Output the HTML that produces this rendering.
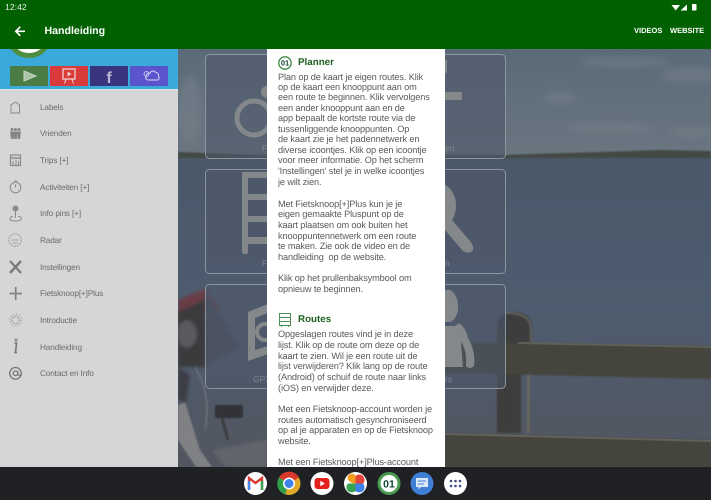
<!DOCTYPE html>
<html><head><meta charset="utf-8"><style>
html,body{margin:0;padding:0;background:#000}
#r{position:relative;width:711px;height:500px;overflow:hidden;font-family:"Liberation Sans",sans-serif;text-rendering:geometricPrecision}
#r svg{position:absolute;left:0;top:0}
.t{position:absolute;white-space:nowrap}
#side{position:absolute;left:0;top:49px;width:178px;height:418px;background:#d6d6d6}
.m{position:absolute;left:40px;font-size:8.2px;line-height:12px;color:#6a6a6a;white-space:nowrap;letter-spacing:-.12px}
#p{position:absolute;left:267px;top:49px;width:178px;height:418px;background:#fff;overflow:hidden}
.l{position:absolute;left:11px;font-size:9.2px;line-height:11px;color:#5a5a5a;white-space:nowrap;letter-spacing:-.12px}
.h{position:absolute;left:31px;font-size:9.8px;line-height:12px;font-weight:bold;color:#1c5f20;white-space:nowrap}
</style></head><body><div id="r">
<svg width="711" height="500" viewBox="0 0 711 500">
<defs>
<linearGradient id="s" x1="0" y1="0" x2="0" y2="1"><stop offset="0" stop-color="#5a6a78"/><stop offset="1" stop-color="#6a7680"/></linearGradient>
<linearGradient id="w" x1="0" y1="0" x2="0" y2="1"><stop offset="0" stop-color="#4a586a"/><stop offset=".5" stop-color="#4e5c6f"/><stop offset="1" stop-color="#525660"/></linearGradient>
<filter id="b"><feGaussianBlur stdDeviation="3.500"/></filter>
<filter id="b2"><feGaussianBlur stdDeviation="1.500"/></filter>
<filter id="b1"><feGaussianBlur stdDeviation=".8"/></filter>
</defs>
<rect y="49" width="711" height="107" fill="url(#s)"/>
<rect y="156" width="711" height="311" fill="url(#w)"/>
<g filter="url(#b)" fill="#76818a" opacity=".55">
<ellipse cx="625" cy="62" rx="45" ry="5"/><ellipse cx="690" cy="75" rx="30" ry="8"/><ellipse cx="560" cy="98" rx="16" ry="6"/>
<ellipse cx="610" cy="128" rx="45" ry="5"/><ellipse cx="692" cy="132" rx="22" ry="5"/><ellipse cx="190" cy="110" rx="12" ry="35"/>
</g>
<path d="M178 152L205 153 260 155 505 155 530 154 600 152 660 150 711 151V158H178Z" fill="#434944" filter="url(#b1)"/>
<!-- fence -->
<path d="M497 433V325Q499 312 514 312 530 312 532 326V343H521V433Z" fill="#3e3e3e" filter="url(#b1)"/>
<path d="M505 313Q530 312 531 328V342" fill="none" stroke="#62625e" stroke-width="2" filter="url(#b1)"/>
<rect x="527" y="373" width="3" height="60" fill="#68685f" filter="url(#b1)"/>
<path d="M445 342L711 346V379L445 373Z" fill="#44443c" filter="url(#b1)"/>
<path d="M518 342L711 346V348L518 344Z" fill="#5f6058"/>
<path d="M445 433L711 440V467H445Z" fill="#44443e" filter="url(#b1)"/>
<path d="M445 433L711 440V442L445 435Z" fill="#62625b"/>
<!-- bike -->
<path d="M178 300L205 289 222 310 178 318Z" fill="#6a3d44" filter="url(#b2)"/>
<path d="M205 292L240 347 205 367Z" fill="#474b58" filter="url(#b2)"/>
<path d="M178 312L205 300 206 367H178Z" fill="#3b3a3e" filter="url(#b2)"/>
<ellipse cx="187" cy="334" rx="10" ry="14" fill="#5a5a5e" filter="url(#b2)"/>
<path d="M178 405L185 402 200 450 212 467H196L178 440Z" fill="#808185" filter="url(#b1)"/>
<path d="M178 367L178 400 186 402 190 375Z" fill="#3d3e44" filter="url(#b2)"/>
<rect x="215" y="405" width="28" height="13" rx="2" fill="#323338" filter="url(#b1)"/>
<path d="M222 418L228 440" stroke="#3a3a3e" stroke-width="3" filter="url(#b1)"/>
<path d="M212 450L267 440V467H226Z" fill="#62656c" filter="url(#b2)"/>
<path d="M195 367Q212 395 205 430" fill="none" stroke="#7a7c80" stroke-width="1" filter="url(#b1)"/>
<!-- cards -->
<g fill="#4e596b" fill-opacity=".6" stroke="#8c959c" stroke-width="1">
<rect x="205.500" y="54.500" width="90" height="104" rx="4"/><rect x="205.500" y="169.500" width="90" height="104" rx="4"/><rect x="205.500" y="284.500" width="90" height="104" rx="4"/>
<rect x="400.500" y="54.500" width="105" height="104" rx="4"/><rect x="400.500" y="169.500" width="105" height="104" rx="4"/><rect x="400.500" y="284.500" width="105" height="104" rx="4"/>
</g>
<!-- card icons -->
<g fill="#85888a" stroke="none">
<circle cx="254" cy="118" r="17" fill="none" stroke="#85888a" stroke-width="5"/>
<circle cx="267" cy="92" r="6"/>
<rect x="242" y="172" width="6" height="82" rx="2"/><rect x="242" y="172" width="28" height="6"/><rect x="242" y="194" width="28" height="6"/><rect x="242" y="216" width="28" height="6"/><rect x="242" y="237" width="28" height="7"/>
<path d="M248 312L268 304V313L255 318V350L268 346V354L248 361Z"/>
<circle cx="265" cy="332" r="8" fill="none" stroke="#85888a" stroke-width="4"/>
<rect x="440" y="92" width="22" height="8"/>
<path d="M440 60H447V72L440 78Z"/>
<path d="M440 181Q456 190 456 205Q456 214 452 220L470 241Q476 249 471 252 466 254 462 250L440 224Z"/>
<path d="M440 290H450Q459 295 458 310 456 320 450 322L440 322Z"/>
<path d="M440 326H455L459 323Q466 328 468 338 476 352 474 366 470 370 466 366 467 350 461 342L463 367H440Z"/>
</g>
<g font-family="Liberation Sans" font-size="8.500" fill="#82878c"><text x="262" y="151">F</text><text x="262" y="266">F</text><text x="253" y="382">GPX</text><text x="445" y="151">en</text><text x="445" y="266">n</text><text x="445" y="382">rs</text></g>
<!-- header -->
<rect width="711" height="49" fill="#016101"/>
<path d="M25 31.300H16M20.300 26.800L15.800 31.300 20.300 35.800" fill="none" stroke="#fff" stroke-width="1.700"/>
<path d="M671.500 5L680 5 675.700 10.500Z" fill="#fff"/>
<path d="M687 4.500V10.500H680.500Z" fill="#fff"/>
<rect x="692" y="4" width="4.500" height="6.500" rx=".8" fill="#fff"/>
<!-- dock -->
<rect y="467" width="711" height="33" fill="#202124"/>
<circle cx="255.500" cy="483.500" r="11.500" fill="#fff"/>
<path d="M249 490V478L255.500 483 262 478V490" fill="none" stroke="#d93a30" stroke-width="2.400"/>
<path d="M249 481V490" stroke="#4285f4" stroke-width="2.400"/><path d="M262 481V490" stroke="#34a853" stroke-width="2.400"/>
<circle cx="289" cy="483.500" r="11.500" fill="#e0a92a"/>
<path d="M289 483.500L279 477.500A11.500 11.500 0 0 1 299 477.500Z" fill="#d8392c"/>
<path d="M289 483.500L279 477.500A11.500 11.500 0 0 0 285 494.500Z" fill="#2f9e49"/>
<circle cx="289" cy="483.500" r="6" fill="#fff"/><circle cx="289" cy="483.500" r="4.500" fill="#3f81ea"/>
<circle cx="322" cy="483.500" r="11.500" fill="#fff"/>
<rect x="314.500" y="478" width="15" height="11" rx="3" fill="#e3201c"/><path d="M320.300 480.700V486.300L325 483.500Z" fill="#fff"/>
<circle cx="355.500" cy="483.500" r="11.500" fill="#fff"/>
<path d="M355.500 483.500V476A3.800 3.800 0 0 0 348 479.700Q351 483.500 355.500 483.500Z" fill="#ef9d1c"/>
<path d="M355.500 483.500H363A3.800 3.800 0 0 0 355.500 476Z" fill="#e3453a"/>
<path d="M355.500 483.500V491A3.800 3.800 0 0 0 363 483.500Z" fill="#3f81ea"/>
<path d="M355.500 483.500H348A3.800 3.800 0 0 0 355.500 491Z" fill="#37a352"/>
<circle cx="389" cy="483.500" r="11.500" fill="#4a9a50"/><circle cx="389" cy="483.500" r="8.500" fill="#fff"/>
<text x="389" y="487.500" text-anchor="middle" font-family="Liberation Sans" font-size="10.500" font-weight="bold" fill="#143">01</text>
<circle cx="422" cy="483.500" r="11.500" fill="#3f7fd6"/>
<path d="M416 478H428V487H421L418.500 489.500V487H416Z" fill="#dbe8f8"/><path d="M418 481H426M418 484H424" stroke="#3f7fd6" stroke-width="1"/>
<circle cx="455.500" cy="483.500" r="11.500" fill="#fff"/>
<g fill="#3d4a8a"><circle cx="451" cy="481" r="1.300"/><circle cx="455.500" cy="481" r="1.300"/><circle cx="460" cy="481" r="1.300"/><circle cx="451" cy="486" r="1.300"/><circle cx="455.500" cy="486" r="1.300"/><circle cx="460" cy="486" r="1.300"/></g>
</svg>

<div class="t" style="left:5px;top:2px;font-size:8.7px;line-height:11px;color:#e8f0e8">12:42</div>
<div class="t" style="left:44.500px;top:25px;font-size:10.6px;line-height:13px;font-weight:bold;color:#fff">Handleiding</div>
<div class="t" style="left:634px;top:26px;font-size:7.500px;line-height:10px;font-weight:bold;color:#fff">VIDEOS</div>
<div class="t" style="left:670px;top:26px;font-size:7.500px;line-height:10px;font-weight:bold;color:#fff">WEBSITE</div>

<div id="side">
<svg width="178" height="418" viewBox="0 0 178 418" style="top:0;left:0">
<rect width="178" height="40" fill="#3aaadb"/>
<circle cx="29" cy="-14.500" r="21" fill="#fff" stroke="#4f8f3f" stroke-width="5"/>
<rect x="10" y="17" width="38" height="20" fill="#4a7d45"/>
<path d="M24 22V32L36 27Z" fill="#a9c2a4" stroke="#c5d6c0" stroke-width="1"/>
<rect x="50" y="17" width="38" height="20" fill="#d93a3a"/>
<rect x="63" y="20" width="12" height="10" fill="none" stroke="#f5d0d0" stroke-width="1.300"/><path d="M67.500 22.500V27.500L71.500 25Z" fill="#f5d0d0"/><path d="M66 30L64.500 34.500M72 30L73.500 34.500" stroke="#f5d0d0"/>
<rect x="90" y="17" width="38" height="20" fill="#39347e"/>
<text x="109" y="34" text-anchor="middle" font-family="Liberation Sans" font-weight="bold" font-size="16" fill="#b9b8d6">f</text>
<rect x="130" y="17" width="38" height="20" fill="#5a55cc"/>
<path d="M146 28Q146 24 150 24 152 20.500 155 23 159 24 158.500 27 160 29 158 31H148Q145 30 146 28Z" fill="none" stroke="#d8d7f5" stroke-width="1"/>
<circle cx="146.500" cy="25" r="2.500" fill="none" stroke="#d8d7f5" stroke-width=".8"/>
<rect y="40" width="178" height="1" fill="#e4e4e4"/>
<g fill="none" stroke="#8b8b8b" stroke-width="1">
<path d="M11 56L15.500 53 19.500 56V64H11Z"/>
<g fill="#858585" stroke="none"><circle cx="12" cy="80.500" r="1.500"/><circle cx="15.500" cy="80.500" r="1.500"/><circle cx="19" cy="80.500" r="1.500"/><path d="M10 82.500H14L13.500 90H11ZM13.500 82.500H17.500L17 90H14ZM17 82.500H21L20 90H18Z"/></g>
<rect x="10.500" y="106" width="10" height="10.500" stroke-width="1.200"/><path d="M10 109H21" stroke-width="1.500"/><path d="M13 112V116M16 110.500V116M18.500 112V116"/>
<circle cx="15.500" cy="138.500" r="5.300"/><path d="M14 132H17M15.500 135.500V138.500"/>
<circle cx="15.500" cy="159.500" r="2.500" fill="#8a8a8a"/><path d="M15.500 162V169M10 170Q10 167.500 13 167.500M18 167.500Q21.500 167.500 21.500 170 21 172 15.500 172 10 172 10 170"/>
<circle cx="15" cy="191" r="6.300" stroke="#a6a6a6" stroke-width="1.300" stroke-dasharray="2 1"/><path d="M11 191H19M12 194H18" stroke="#a6a6a6"/>
<path d="M10 212L21 224" stroke-width="2.300" stroke="#7d7d7d"/><path d="M21 212L10 224" stroke-width="2.600" stroke="#7d7d7d"/>
<path d="M9.500 244.500H22M15.700 238V251" stroke-width="1.700" stroke="#808080"/>
<circle cx="15.700" cy="271" r="3.500" stroke="#a0a0a0" stroke-dasharray="2 1" stroke-width="1.300"/><circle cx="15.700" cy="271" r="5.700" stroke="#a0a0a0" stroke-dasharray="1.500 1.500" stroke-width="1"/>
<path d="M14.500 294H16.500L15.500 303.500H17M14 303.500H15.500" stroke-width="1.600" stroke="#777"/><circle cx="16" cy="291" r="1" fill="#777"/>
<circle cx="15.500" cy="324.300" r="5.800" stroke-width="1.300" stroke="#777"/><circle cx="15.500" cy="324.300" r="2.300" stroke-width="1.300" stroke="#777"/><path d="M18 322V326Q19.500 327 21.300 325" stroke="#777"/>
</g>
</svg>
<div class="m" style="top:52.500px">Labels</div>
<div class="m" style="top:79px">Vrienden</div>
<div class="m" style="top:105.500px">Trips [+]</div>
<div class="m" style="top:132.500px">Activiteiten [+]</div>
<div class="m" style="top:159px">Info pins [+]</div>
<div class="m" style="top:185.500px">Radar</div>
<div class="m" style="top:212.500px">Instellingen</div>
<div class="m" style="top:239px">Fietsknoop[+]Plus</div>
<div class="m" style="top:265.500px">Introductie</div>
<div class="m" style="top:292.500px">Handleiding</div>
<div class="m" style="top:318.500px">Contact en Info</div>
</div>

<div id="p">
<svg width="178" height="418" viewBox="0 0 178 418" style="left:0;top:0">
<circle cx="18" cy="14" r="6.200" fill="none" stroke="#3d8a42" stroke-width="1.300"/>
<text x="18" y="16.700" text-anchor="middle" font-family="Liberation Sans" font-size="7.500" font-weight="bold" fill="#143">01</text>
<g fill="none" stroke="#4d9152" stroke-width="1"><rect x="12.500" y="264.500" width="11" height="12"/><path d="M12.500 268.500H23.500M12.500 272.500H23.500M14.500 276.500V278M21.500 276.500V278"/></g>
</svg>
<div class="h" style="top:8px">Planner</div>
<div class="l" style="top:22.500px">Plan op de kaart je eigen routes. Klik</div>
<div class="l" style="top:33px">op de kaart een knooppunt aan om</div>
<div class="l" style="top:43.400px">een route te beginnen. Klik vervolgens</div>
<div class="l" style="top:53.900px">een ander knooppunt aan en de</div>
<div class="l" style="top:64.300px">app bepaalt de kortste route via de</div>
<div class="l" style="top:74.800px">tussenliggende knooppunten. Op</div>
<div class="l" style="top:85.200px">de kaart zie je het padennetwerk en</div>
<div class="l" style="top:95.700px">diverse icoontjes. Klik op een icoontje</div>
<div class="l" style="top:106.100px">voor meer informatie. Op het scherm</div>
<div class="l" style="top:116.600px">'Instellingen' stel je in welke icoontjes</div>
<div class="l" style="top:128px">je wilt zien.</div>
<div class="l" style="top:149.500px">Met Fietsknoop[+]Plus kun je je</div>
<div class="l" style="top:160px">eigen gemaakte Pluspunt op de</div>
<div class="l" style="top:171px">kaart plaatsen om ook buiten het</div>
<div class="l" style="top:181.500px">knooppuntennetwerk om een route</div>
<div class="l" style="top:192px">te maken. Zie ook de video en de</div>
<div class="l" style="top:203px">handleiding&nbsp; op de website.</div>
<div class="l" style="top:224px">Klik op het prullenbaksymbool om</div>
<div class="l" style="top:235px">opnieuw te beginnen.</div>
<div class="h" style="top:265px">Routes</div>
<div class="l" style="top:280px">Opgeslagen routes vind je in deze</div>
<div class="l" style="top:291px">lijst. Klik op de route om deze op de</div>
<div class="l" style="top:301.500px">kaart te zien. Wil je een route uit de</div>
<div class="l" style="top:312px">lijst verwijderen? Klik lang op de route</div>
<div class="l" style="top:323px">(Android) of schuif de route naar links</div>
<div class="l" style="top:333.500px">(iOS) en verwijder deze.</div>
<div class="l" style="top:355px">Met een Fietsknoop-account worden je</div>
<div class="l" style="top:365.500px">routes automatisch gesynchroniseerd</div>
<div class="l" style="top:376px">op al je apparaten en op de Fietsknoop</div>
<div class="l" style="top:387px">website.</div>
<div class="l" style="top:408px">Met een Fietsknoop[+]Plus-account</div>
</div>
</div></body></html>
